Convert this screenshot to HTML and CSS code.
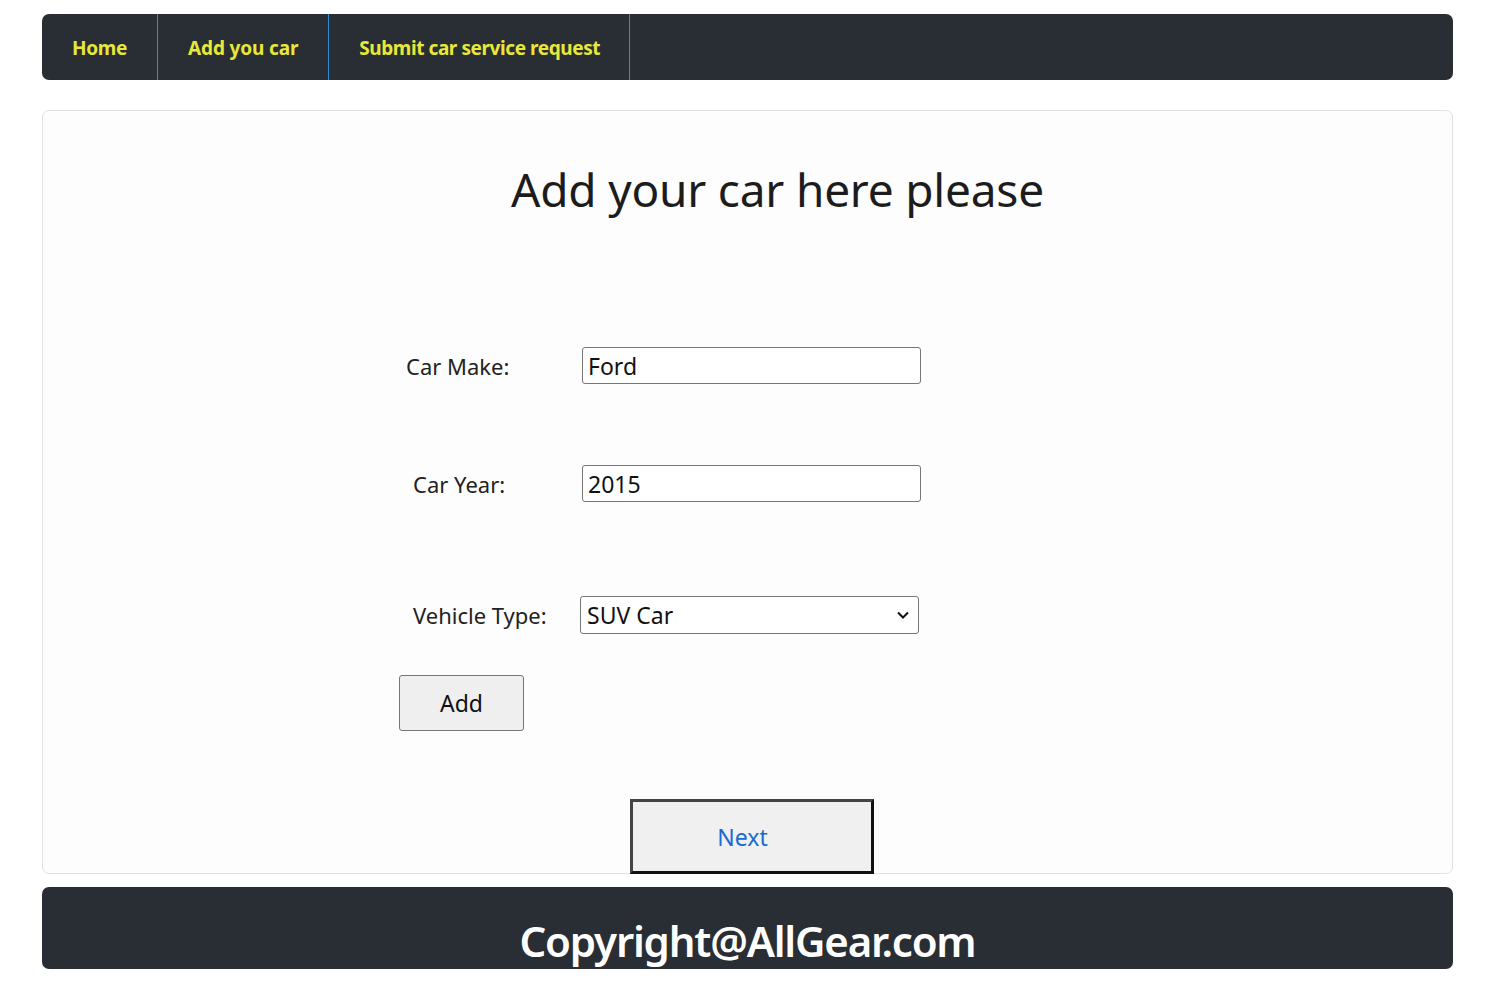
FILE: index.html
```html
<!DOCTYPE html>
<html>
<head>
<meta charset="utf-8">
<link rel="stylesheet" href="styles.css">
</head>
<body>
<div class="page">
  <nav class="topnav">
    <a class="nav-item nav-home" href="#">Home</a>
    <a class="nav-item nav-add" href="#">Add you car</a>
    <a class="nav-item nav-submit" href="#">Submit car service request</a>
  </nav>
  <main class="card">
    <h1 class="title">Add your car here please</h1>
    <form class="car-form">
      <div class="row row-make">
        <label class="lbl lbl-make">Car Make:</label>
        <input class="field" type="text" value="Ford">
      </div>
      <div class="row row-year">
        <label class="lbl lbl-year">Car Year:</label>
        <input class="field" type="text" value="2015">
      </div>
      <div class="row row-type">
        <label class="lbl lbl-type">Vehicle Type:</label>
        <div class="select">
          <span>SUV Car</span>
          <svg class="chev" width="14" height="10" viewBox="0 0 14 10"><path d="M2 2.5 L7 7.5 L12 2.5" fill="none" stroke="#111" stroke-width="2"/></svg>
        </div>
      </div>
      <button class="btn-add" type="button">Add</button>
    </form>
    <div class="next-wrap">
      <button class="btn-next" type="button">Next</button>
    </div>
  </main>
  <footer class="footer">Copyright@AllGear.com</footer>
</div>
</body>
</html>
```
FILE: styles.css
```css
* { box-sizing: border-box; }
body {
  margin: 0;
  background: #ffffff;
  font-family: "Noto Sans", "Open Sans", sans-serif;
  color: #212529;
}
.page {
  margin: 14px 47px 0 42px;
}
.topnav {
  display: flex;
  height: 66px;
  background: #292e34;
  border-radius: 7px;
  overflow: hidden;
}
.nav-item {
  display: flex;
  align-items: center;
  padding: 2px 30px 0 30px;
  color: #e8e83a;
  font-weight: 700;
  font-size: 19px;
  letter-spacing: -0.4px;
  text-decoration: none;
  border-right: 1px solid #2f8fd0;
}
.nav-home { letter-spacing: -0.3px; padding-right: 30px; }
.nav-add { letter-spacing: -0.15px; }
.nav-submit { letter-spacing: -0.42px; padding-right: 29px; }
.card {
  margin-top: 30px;
  height: 764px;
  border: 1px solid #e2e2e2;
  border-radius: 7px;
  background: #fdfdfd;
  display: flex;
  flex-direction: column;
}
.title {
  margin: 48px 0 0 60px;
  text-align: center;
  font-weight: 400;
  font-size: 46px;
  line-height: 60px;
  color: #1c1c1c;
  letter-spacing: -0.2px;
}
.car-form {
  display: flex;
  flex-direction: column;
  margin-left: 356px;
}
.row {
  display: flex;
  align-items: center;
}
.lbl {
  font-size: 22px;
  color: #222;
}
.row-make { margin-top: 128px; }
.row-year { margin-top: 81px; }
.row-type { margin-top: 94px; }
.lbl-make { width: 183px; padding-left: 7px; }
.lbl-year { width: 183px; padding-left: 14px; }
.lbl-type { width: 181px; padding-left: 14px; }
.field {
  width: 339px;
  height: 37px;
  border: 1px solid #767676;
  border-radius: 3px;
  background: #fff;
  font-family: inherit;
  font-size: 23px;
  color: #111;
  padding: 0 5px;
}
.select {
  width: 339px;
  height: 38px;
  border: 1px solid #767676;
  border-radius: 3px;
  background: #fff;
  display: flex;
  align-items: center;
  justify-content: space-between;
  padding: 0 6px 0 6px;
  font-size: 23px;
  color: #111;
}
.chev { margin-right: 2px; }
.btn-add {
  align-self: flex-start;
  margin-top: 41px;
  width: 125px;
  height: 56px;
  border: 1px solid #767676;
  border-radius: 3px;
  background: #efefef;
  font-family: inherit;
  font-size: 23px;
  color: #111;
}
.next-wrap {
  display: flex;
  justify-content: center;
  margin-top: 68px;
  padding-left: 8px;
}
.btn-next {
  width: 244px;
  height: 75px;
  border: 3px solid #111;
  border-top-color: #444;
  border-left-color: #444;
  background: #f0f0f0;
  font-family: inherit;
  font-size: 23px;
  color: #1a6ad0;
  padding: 0 18px 0 0;
}
.footer {
  margin-top: 13px;
  height: 82px;
  background: #292e34;
  border-radius: 7px;
  color: #ffffff;
  text-align: center;
  font-size: 42px;
  font-weight: 600;
  line-height: 108px;
  overflow: hidden;
  letter-spacing: -1.2px;
}
```
